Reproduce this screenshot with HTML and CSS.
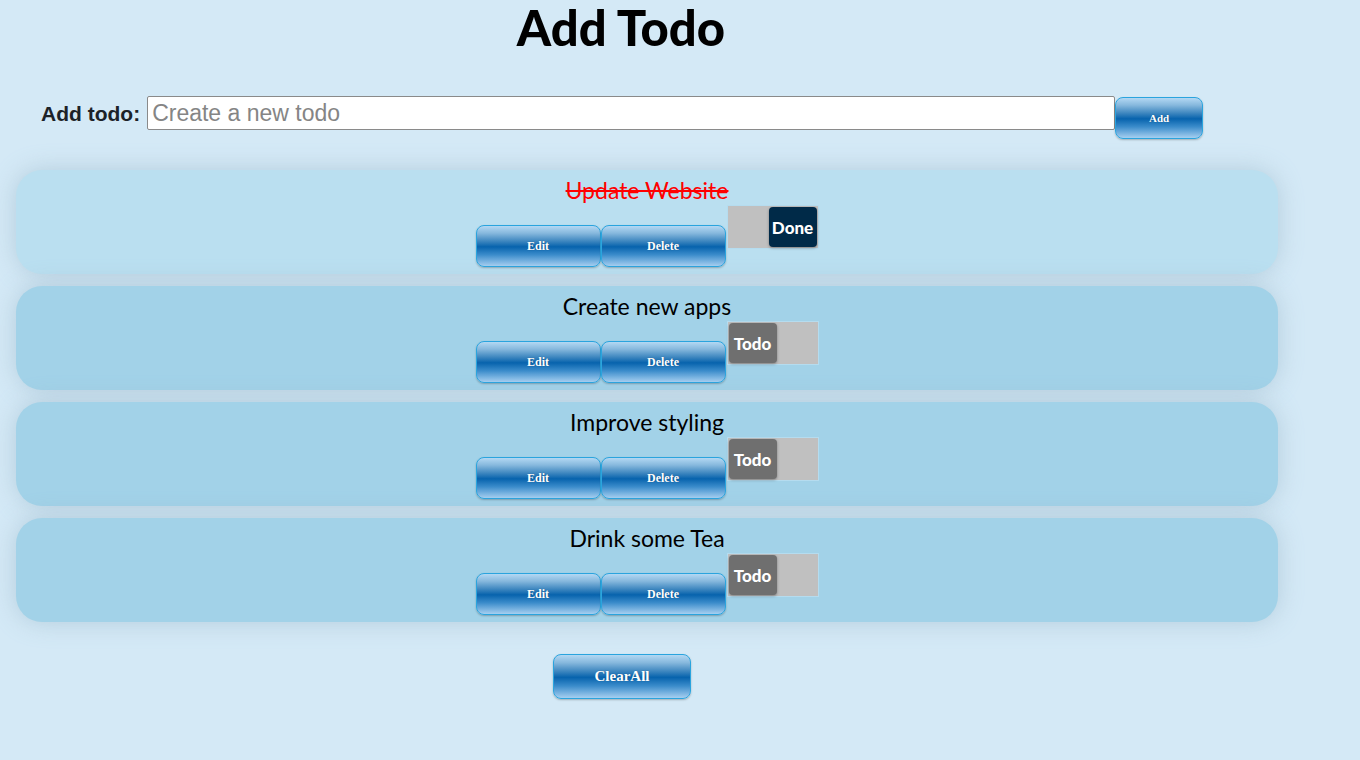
FILE: index.html
```html
<!DOCTYPE html>
<html>
<head>
<meta charset="utf-8">
<link rel="stylesheet" href="styles.css">
</head>
<body>
<div class="page">
  <h1 class="title">Add Todo</h1>
  <form class="add-row">
    <label class="add-label">Add todo:</label>
    <input class="add-input" type="text" placeholder="Create a new todo">
    <button type="button" class="btn btn-add">Add</button>
  </form>
  <ul class="todo-list">
    <li class="todo todo-done">
      <div class="todo-text done-text">Update Website</div>
      <div class="todo-actions">
        <button class="btn btn-small">Edit</button>
        <button class="btn btn-small">Delete</button>
        <div class="toggle toggle-on"><span class="knob knob-done">Done</span></div>
      </div>
    </li>
    <li class="todo">
      <div class="todo-text">Create new apps</div>
      <div class="todo-actions">
        <button class="btn btn-small">Edit</button>
        <button class="btn btn-small">Delete</button>
        <div class="toggle"><span class="knob">Todo</span></div>
      </div>
    </li>
    <li class="todo">
      <div class="todo-text">Improve styling</div>
      <div class="todo-actions">
        <button class="btn btn-small">Edit</button>
        <button class="btn btn-small">Delete</button>
        <div class="toggle"><span class="knob">Todo</span></div>
      </div>
    </li>
    <li class="todo">
      <div class="todo-text">Drink some Tea</div>
      <div class="todo-actions">
        <button class="btn btn-small">Edit</button>
        <button class="btn btn-small">Delete</button>
        <div class="toggle"><span class="knob">Todo</span></div>
      </div>
    </li>
  </ul>
  <div class="clear-row">
    <button class="btn btn-clear">ClearAll</button>
  </div>
</div>
</body>
</html>
```

FILE: styles.css
```css
html, body {
  margin: 0;
  padding: 0;
  background: #d4e9f6;
  height: 100%;
}
.page {
  width: 1360px;
}
.title {
  width: 1242px;
  margin: 0;
  padding-top: 1px;
  text-align: center;
  font-family: "Lato", "DejaVu Sans", sans-serif;
  font-weight: 900;
  font-size: 49px;
  line-height: 53px;
  color: #000;
}
.add-row {
  display: flex;
  align-items: flex-start;
  margin: 42px 0 0 41px;
}
.add-label {
  font-family: "Liberation Sans", Arial, sans-serif;
  font-weight: bold;
  font-size: 21px;
  color: #1c2228;
  line-height: 33px;
  margin-top: 1px;
  margin-right: 7px;
}
.add-input {
  box-sizing: border-box;
  width: 968px;
  height: 34px;
  border: 1px solid #8a8a8a;
  border-radius: 2px;
  padding: 0 4px;
  font-family: "Liberation Sans", Arial, sans-serif;
  font-size: 23px;
  background: #fff;
  outline: none;
}
.add-input::placeholder {
  color: #858585;
}
.btn {
  box-sizing: border-box;
  border: 1px solid #2aa4de;
  border-radius: 8px;
  background: linear-gradient(to bottom, #b3d8f3 0%, #86b8dd 18%, #3d86bf 38%, #0763ad 52%, #3b8ccb 72%, #a6cff0 100%);
  color: #fff;
  font-family: "Liberation Serif", "Times New Roman", serif;
  font-weight: bold;
  text-shadow: 0 0 1px rgba(0,0,0,0.3);
  box-shadow: 0 1px 2px rgba(0,0,0,0.25);
  padding: 0;
  cursor: pointer;
}
.btn-add {
  width: 88px;
  height: 42px;
  font-size: 11px;
  margin-top: 1px;
}
.todo-list {
  list-style: none;
  margin: 31px 0 0 16px;
  padding: 0;
  width: 1262px;
  display: flex;
  flex-direction: column;
  gap: 12px;
}
.todo {
  height: 104px;
  box-sizing: border-box;
  border-radius: 26px;
  background: #a2d2e8;
  box-shadow: 0 0 24px rgba(140, 170, 190, 0.45);
  padding-top: 6px;
  display: flex;
  flex-direction: column;
  align-items: center;
}
.todo-done {
  background: #badff0;
}
.todo-text {
  font-family: "Lato", "Open Sans", sans-serif;
  font-size: 23px;
  line-height: 29px;
  color: #000;
}
.done-text {
  color: #ff0000;
  text-decoration: line-through;
}
.todo-actions {
  display: flex;
  align-items: flex-start;
}
.btn-small {
  width: 125px;
  height: 42px;
  font-size: 12px;
  margin-top: 20px;
}
.toggle {
  box-sizing: border-box;
  width: 92px;
  height: 44px;
  margin-left: 1px;
  background: #c0c0c0;
  border: 1px solid #b5dcef;
  display: flex;
  align-items: center;
  justify-content: flex-start;
  padding: 0 1px;
}
.toggle-on {
  justify-content: flex-end;
}
.knob {
  width: 48px;
  height: 40px;
  border-radius: 4px;
  background: #6f6f6f;
  color: #fff;
  font-family: "Lato", "DejaVu Sans", sans-serif;
  font-weight: 900;
  font-size: 17px;
  display: flex;
  align-items: center;
  justify-content: center;
  box-shadow: 0 1px 3px rgba(0,0,0,0.35);
}
.knob-done {
  background: #002a48;
}
.clear-row {
  width: 1244px;
  display: flex;
  justify-content: center;
  margin-top: 32px;
}
.btn-clear {
  width: 138px;
  height: 45px;
  font-size: 15px;
}
```
